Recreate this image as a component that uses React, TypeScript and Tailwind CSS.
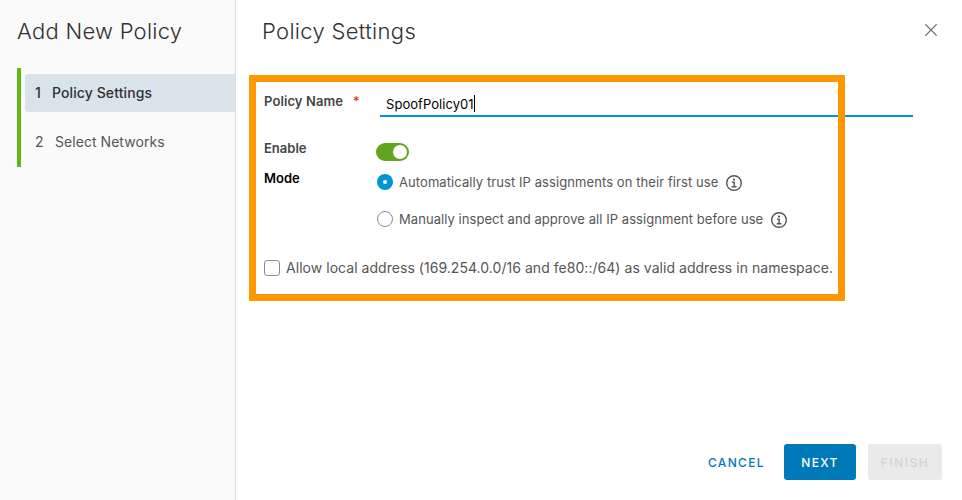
import React from "react";

function InfoIcon() {
  return (
    <svg className="block h-4 w-4 shrink-0" viewBox="0 0 16 16" fill="none" stroke="#565656">
      <circle cx="8" cy="8" r="7.3" strokeWidth="1.4" />
      <circle cx="8" cy="4.6" r="1.1" fill="#565656" stroke="none" />
      <path d="M6.1 7.2H8.2V11.6M5.7 11.8H10.5" strokeWidth="1.4" />
    </svg>
  );
}

function Sidebar() {
  return (
    <aside className="flex w-[236px] shrink-0 flex-col border-r border-[#dedede] bg-[#fafafa] pl-[17px]">
      <h1 className="mt-[19px] h-6 text-[22px] leading-6 font-light tracking-[0.26px] text-[#313131]">Add New Policy</h1>
      <nav className="mt-[25px] flex h-[99px] flex-col border-l-4 border-[#62b513] pt-[6px] pl-1 text-sm">
        <div className="flex h-[38px] items-center rounded-l-[3px] bg-[#d9e4ea] pl-[10px] font-medium text-[#313131]">
          <span className="w-[17px]">1</span>
          <span className="tracking-[0.1px]">Policy Settings</span>
        </div>
        <div className="mt-[11px] flex h-[38px] items-center pl-[10px] text-[#565656]">
          <span className="w-5">2</span>
          <span className="tracking-[0.05px]">Select Networks</span>
        </div>
      </nav>
    </aside>
  );
}

export default function App() {
  return (
    <div className="relative flex h-[500px] w-[962px] overflow-hidden bg-white font-['Inter',sans-serif] whitespace-nowrap">
      <Sidebar />
      <main className="flex flex-1 flex-col pl-[26px]">
        <header className="flex h-[43px] items-end justify-between pr-[25px]">
          <h2 className="h-6 text-[22px] leading-6 font-light tracking-[0.32px] text-[#313131]">Policy Settings</h2>
          <svg className="mb-[7px] h-3 w-3" viewBox="0 0 12 12" fill="none" stroke="#666" strokeWidth="1.2">
            <path d="M0.3 0.3L11.7 11.7M11.7 0.3L0.3 11.7" />
          </svg>
        </header>

        <form className="mt-[48px] flex h-[353px] flex-col pl-[2px] text-[13px] leading-5 text-[#565656]">
          <div className="flex h-[26px]">
            <label className="flex w-[116px] font-semibold text-[#454545]">
              <span className="w-[89px] tracking-[0.1px]">Policy Name</span>
              <span className="font-normal text-[#e12200]">*</span>
            </label>
            <div className="flex h-[26px] w-[533px] items-end border-b-2 border-[#0095d3] pl-[6px] text-black">
              <span className="mb-px tracking-[0.05px]">SpoofPolicy01</span>
              <span className="mb-[3px] h-[17px] w-px bg-black" />
            </div>
          </div>
          <div className="mt-[21px] flex h-[30px]">
            <span className="w-[112px] font-semibold text-[#454545]">Enable</span>
            <span className="mt-[5px] flex h-[18px] w-[33px] justify-end rounded-full bg-[#62a420] p-[2px]">
              <span className="h-[14px] w-[14px] rounded-full bg-white" />
            </span>
          </div>
          <div className="flex h-[75px]">
            <span className="w-[113px] font-semibold text-black">Mode</span>
            <div className="flex flex-col pt-[4px]">
              <div className="flex h-5 items-center">
                <span className="flex h-4 w-4 items-center justify-center rounded-full bg-[#0095d3]">
                  <span className="h-1 w-1 rounded-full bg-white" />
                </span>
                <span className="ml-[6px] w-[327px] tracking-[0.08px]">Automatically trust IP assignments on their first use</span>
                <span className="pt-[2px]"><InfoIcon /></span>
              </div>
              <div className="mt-[17px] flex h-5 items-center">
                <span className="h-4 w-4 rounded-full border border-[#8c8c8c]" />
                <span className="ml-[6px] w-[372px] tracking-[0.06px]">Manually inspect and approve all IP assignment before use</span>
                <span className="pt-[2px]"><InfoIcon /></span>
              </div>
            </div>
          </div>
          <div className="mt-[15px] flex h-5 items-center text-sm leading-5">
            <span className="h-4 w-4 rounded-[3px] border border-[#8c8c8c]" />
            <span className="ml-[6px] tracking-[0.04px]">Allow local address (169.254.0.0/16 and fe80::/64) as valid address in namespace.</span>
          </div>
        </form>

        <footer className="flex h-9 items-stretch justify-end pr-5 text-xs font-medium">
          <button className="mr-[19px] pt-[2px] tracking-[1.35px] text-[#0079b8]">CANCEL</button>
          <button className="w-[72px] rounded-[3px] bg-[#0079b8] pt-[2px] tracking-[1.3px] text-white">NEXT</button>
          <button className="ml-3 w-[74px] rounded-[3px] bg-[#eaeaea] pt-[2px] tracking-[1.5px] text-[#d4d4d4]">FINISH</button>
        </footer>
      </main>
      <div className="absolute top-[75px] left-[249px] h-[226px] w-[596px] rounded-[1px] border-[7px] border-[#ff9800]" />
    </div>
  );
}
